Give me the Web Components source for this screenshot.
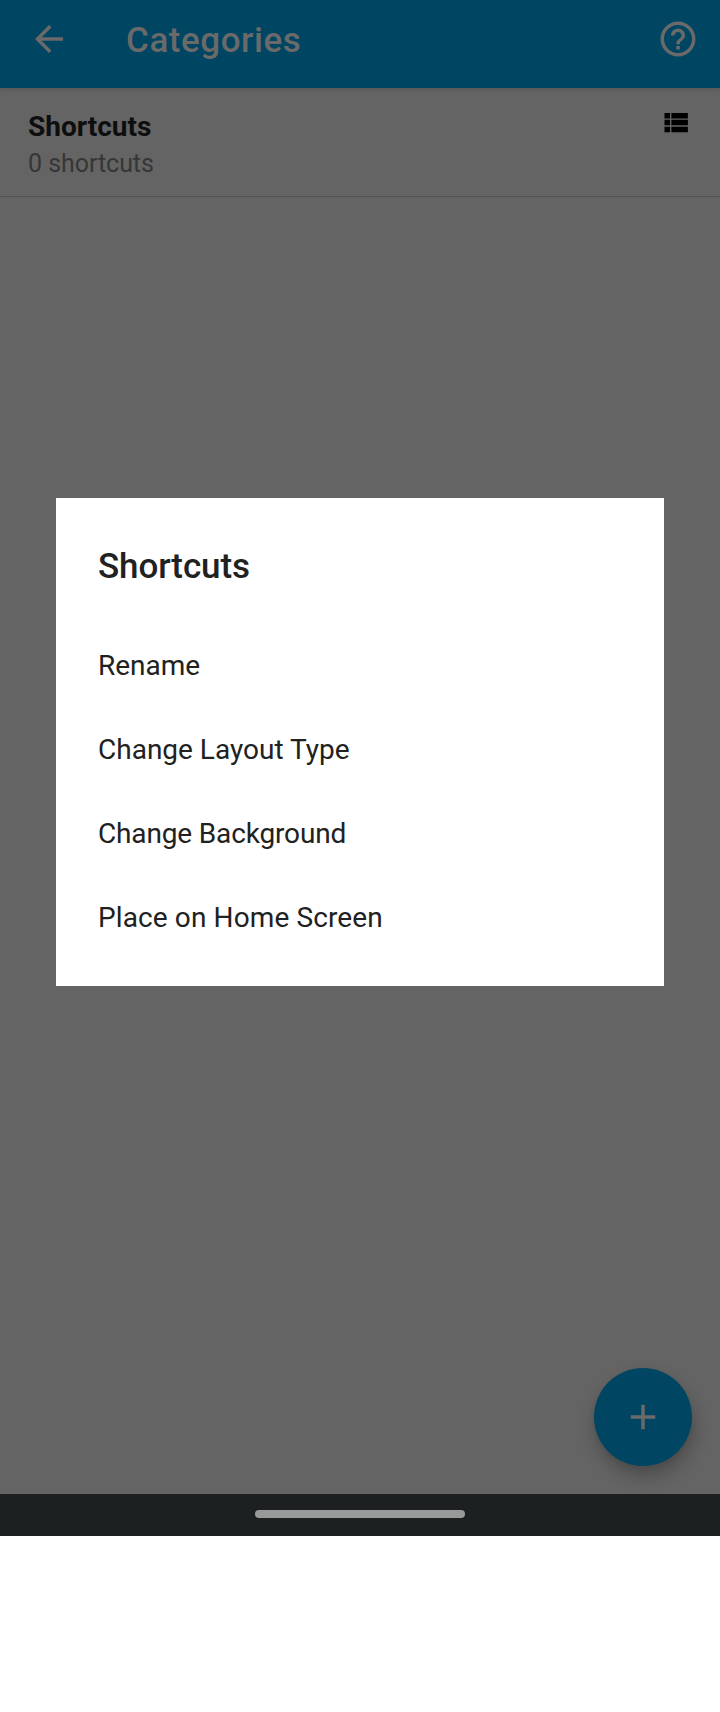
<!DOCTYPE html>
<html lang="en">
<head>
<meta charset="utf-8">
<title>Categories</title>
<style>
html,body{margin:0;background:#fff}
body{font-family:Roboto,"Noto Sans",sans-serif}
</style>
</head>
<body>
<phone-screen>
  <app-bar slot="bar">Categories</app-bar>
  <category-row slot="content">Shortcuts<span slot="count">0 shortcuts</span></category-row>
  <add-button slot="fab"></add-button>
  <menu-dialog slot="dialog">
    <span slot="title">Shortcuts</span>
    <menu-item>Rename</menu-item>
    <menu-item>Change Layout Type</menu-item>
    <menu-item style="--tracking:-.15px">Change Background</menu-item>
    <menu-item style="--tracking:.12px">Place on Home Screen</menu-item>
  </menu-dialog>
  <nav-bar slot="nav"></nav-bar>
</phone-screen>
<script>
const define = (name, html) => customElements.define(name, class extends HTMLElement {
  constructor() {
    super();
    const t = document.createElement('template');
    t.innerHTML = html;
    this.attachShadow({mode: 'open'}).append(t.content.cloneNode(true));
  }
});

define('phone-screen', `<style>
:host{display:flex;flex-direction:column;width:720px;height:1536px;position:relative;background:#646464;overflow:hidden}
main{flex:1}
.overlay{position:absolute;left:56px;top:498px;width:608px}
.fab{position:absolute;right:28px;bottom:70px}
</style><slot name="bar"></slot><main><slot name="content"></slot></main><div class="fab"><slot name="fab"></slot></div><slot name="nav"></slot><div class="overlay"><slot name="dialog"></slot></div>`);

define('app-bar', `<style>
:host{display:flex;align-items:flex-start;box-sizing:border-box;height:88px;padding:18px 21px 0 28px;background:#004562;color:#6a6a6a;box-shadow:0 1px 4px rgba(0,0,0,.16);position:relative}
svg{width:42px;height:42px;fill:currentColor;flex:none}
h1{margin:2px 0 0 56px;flex:1;font-size:35px;line-height:42px;font-weight:500;letter-spacing:.55px}
</style><svg viewBox="0 0 24 24"><path d="M20 11H7.83l5.59-5.59L12 4l-8 8 8 8 1.41-1.41L7.83 13H20v-2z"/></svg><h1><slot></slot></h1><svg viewBox="0 0 24 24"><path d="M11 18h2v-2h-2v2zm1-16C6.48 2 2 6.48 2 12s4.480 10 10 10 10-4.480 10-10S17.520 2 12 2zm0 18c-4.410 0-8-3.590-8-8s3.590-8 8-8 8 3.590 8 8-3.590 8-8 8zm0-14c-2.210 0-4 1.790-4 4h2c0-1.100.9-2 2-2s2 .9 2 2c0 2-3 1.750-3 5h2c0-2.250 3-2.500 3-5 0-2.210-1.790-4-4-4z"/></svg>`);

define('category-row', `<style>
:host{display:flex;justify-content:space-between;box-sizing:border-box;height:109px;padding:17px 28px 0 28px;border-bottom:1px solid #545454}
h2{margin:5px 0 0;font-size:28px;line-height:34px;font-weight:700;color:#0e0e0e}
p{margin:0;font-size:25px;line-height:39px;color:#363636;letter-spacing:-.05px}
svg{width:33px;height:33px;margin-top:.5px;fill:#000}
</style><div><h2><slot></slot></h2><p><slot name="count"></slot></p></div><svg viewBox="0 0 24 24"><path d="M4 14h4v-4H4v4zm0 5h4v-4H4v4zM4 9h4V5H4v4zm5 5h12v-4H9v4zm0 5h12v-4H9v4zM9 5v4h12V5H9z"/></svg>`);

define('add-button', `<style>
:host{display:grid;place-items:center;width:98px;height:98px;border-radius:50%;background:#004562;box-shadow:2px 10px 18px rgba(0,0,0,.24),0 2px 5px rgba(0,0,0,.06)}
svg{width:42px;height:42px;fill:#6a6a6a}
</style><svg viewBox="0 0 24 24"><path d="M19 13h-6v6h-2v-6H5v-2h6V5h2v6h6v2z"/></svg>`);

define('menu-dialog', `<style>
:host{display:block;box-sizing:border-box;height:488px;padding:48px 42px 0;background:#fff;color:#212121}
h2{margin:0 0 36px;font-size:35px;line-height:42px;font-weight:500;letter-spacing:-.1px}
</style><h2><slot name="title"></slot></h2><slot></slot>`);

define('menu-item', `<style>
:host{display:block;font-size:28px;line-height:84px;letter-spacing:var(--tracking,0)}
</style><slot></slot>`);

define('nav-bar', `<style>
:host{display:flex;align-items:center;justify-content:center;height:42px;padding-bottom:2px;box-sizing:border-box;background:#1c2021}
i{width:210px;height:8px;border-radius:4px;background:#979a98}
</style><i></i>`);
</script>
</body>
</html>
